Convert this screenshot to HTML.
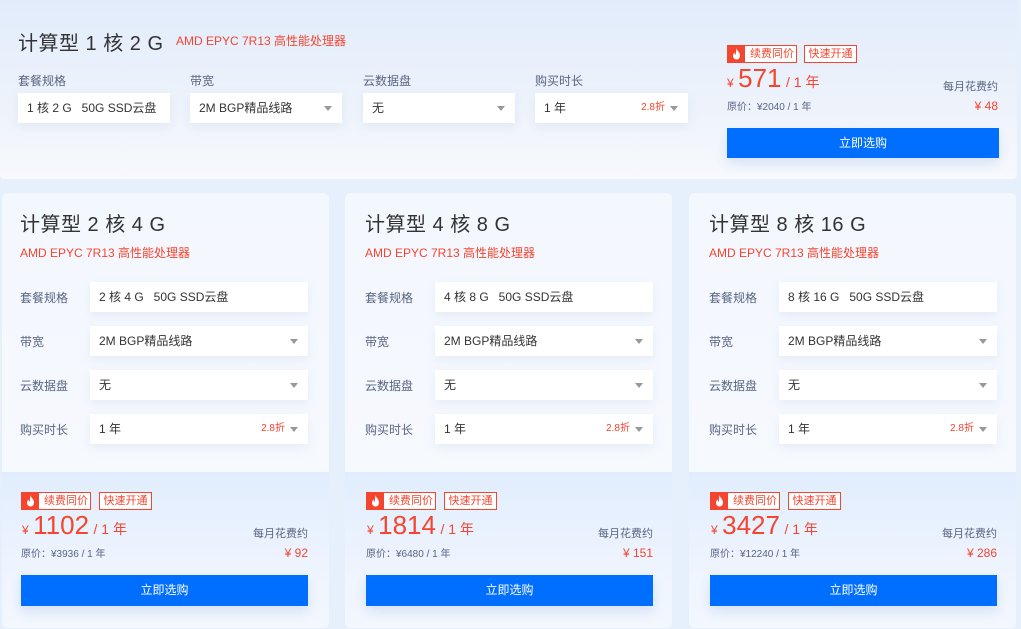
<!DOCTYPE html>
<html><head><meta charset="utf-8"><style>
*{margin:0;padding:0;box-sizing:border-box}
body{width:1021px;height:629px;overflow:hidden;background:#e6f0fd;font-family:"Liberation Sans","Noto Sans CJK SC",sans-serif;position:relative}
.a{position:absolute}
.top{left:0;top:0;width:1017px;height:179px;background:linear-gradient(180deg,#e1ecfb 0%,#eef3fb 60%,#f7f9fd 100%);border-radius:0 0 4px 4px}
.card{top:193px;width:327px;height:435px;border-radius:6px;background:linear-gradient(180deg,#f3f7fe,#f8fafe);overflow:hidden}
.bot{left:0;top:279px;width:100%;height:156px;background:linear-gradient(180deg,#e1edfd,#eef4fe 60%,#f3f7fe)}
.t{font-size:20px;color:#333;white-space:nowrap;letter-spacing:.5px}
.red{color:#f4452f}
.lab{font-size:12px;color:#596482}
.inp{background:#fff;height:30px;font-size:12px;color:#333;line-height:30px;padding-left:9px;box-shadow:0 4px 10px rgba(150,165,200,.15);white-space:nowrap}
.arr{position:absolute;right:10px;top:13px;width:0;height:0;border-left:4px solid transparent;border-right:4px solid transparent;border-top:5px solid #999}
.dz{position:absolute;right:23px;font-size:10px;color:#f4452f}
.tag{height:18px;border:1px solid #f4452f;font-size:11px;color:#f4452f;line-height:16px;white-space:nowrap;background:#fff}
.fire{display:inline-block;width:17px;height:16px;background:#f4452f;vertical-align:top;position:relative}
.btn{background:#006eff;color:#fff;font-size:12px;text-align:center;height:31px;line-height:31px;box-shadow:0 6px 12px rgba(0,80,200,.12)}
</style></head><body>
<div class="a top"></div>
<div class="a t" style="left:18px;top:27px">计算型 1 核 2 G</div>
<div class="a red" style="left:176px;top:32px;font-size:12px">AMD EPYC 7R13 高性能处理器</div>
<div class="a lab" style="left:18px;top:72px">套餐规格</div>
<div class="a lab" style="left:190px;top:72px">带宽</div>
<div class="a lab" style="left:363px;top:72px">云数据盘</div>
<div class="a lab" style="left:535px;top:72px">购买时长</div>
<div class="a inp" style="left:18px;top:93px;width:152px">1 核 2 G &nbsp; 50G SSD云盘</div>
<div class="a inp" style="left:190px;top:93px;width:152px">2M BGP精品线路<span class="arr"></span></div>
<div class="a inp" style="left:363px;top:93px;width:152px">无<span class="arr"></span></div>
<div class="a inp" style="left:535px;top:93px;width:153px">1 年<span class="dz">2.8折</span><span class="arr"></span></div>
<div class="a tag" style="left:727px;top:45px;width:70px"><span class="fire"><svg width="17" height="16" viewBox="0 0 17 16"><path d="M8.5 2C9 5 12 6 12 9.5 12 12 10.5 13.5 8.5 13.5S5 12 5 9.8c0-1.6 1-2.6 1.8-3.3 0 1.4.5 2.2 1.2 2.5C7.5 6.5 8.5 4.5 8.5 2z" fill="#fff"/></svg></span><span style="padding-left:5px">续费同价</span></div>
<div class="a tag" style="left:804px;top:45px;width:53px;text-align:center">快速开通</div>
<div class="a red" style="left:727px;top:63px;white-space:nowrap"><span style="font-size:12px">¥</span> <span style="font-size:26px">571</span> <span style="font-size:14px">/ 1 年</span></div>
<div class="a lab" style="left:727px;top:98px;font-size:10px">原价：¥2040 / 1 年</div>
<div class="a lab" style="right:23px;top:78px;font-size:11px">每月花费约</div>
<div class="a red" style="right:23px;top:99px;font-size:12px">¥ 48</div>
<div class="a btn" style="left:727px;top:128px;width:272px;height:30px;line-height:30px">立即选购</div>

<div class="a card" style="left:2px"><div class="a bot"></div></div>
<div class="a card" style="left:345px"><div class="a bot"></div></div>
<div class="a card" style="left:689px"><div class="a bot"></div></div>

<div id="c"></div>
<script>
var d=[[0,"2 核 4 G","1102","3936","92"],[345,"4 核 8 G","1814","6480","151"],[689,"8 核 16 G","3427","12240","286"]];
var h="";
d.forEach(function(c){var x=c[0];
h+='<div class="a t" style="left:'+(x+20)+'px;top:208px">计算型 '+c[1]+'</div>';
h+='<div class="a red" style="left:'+(x+20)+'px;top:244px;font-size:12px">AMD EPYC 7R13 高性能处理器</div>';
var L=["套餐规格","带宽","云数据盘","购买时长"],V=[c[1]+' &nbsp; 50G SSD云盘','2M BGP精品线路<span class="arr"></span>','无<span class="arr"></span>','1 年<span class="dz">2.8折</span><span class="arr"></span>'];
for(var i=0;i<4;i++){var y=282+i*44;
h+='<div class="a lab" style="left:'+(x+20)+'px;top:'+(y+7)+'px">'+L[i]+'</div>';
h+='<div class="a inp" style="left:'+(x+90)+'px;top:'+y+'px;width:218px">'+V[i]+'</div>';}
h+='<div class="a tag" style="left:'+(x+21)+'px;top:492px;width:70px"><span class="fire"><svg width="17" height="16" viewBox="0 0 17 16"><path d="M8.5 2C9 5 12 6 12 9.5 12 12 10.5 13.5 8.5 13.5S5 12 5 9.8c0-1.6 1-2.6 1.8-3.3 0 1.4.5 2.2 1.2 2.5C7.5 6.5 8.5 4.5 8.5 2z" fill="#fff"/></svg></span><span style="padding-left:5px">续费同价</span></div>';
h+='<div class="a tag" style="left:'+(x+99)+'px;top:492px;width:53px;text-align:center">快速开通</div>';
h+='<div class="a red" style="left:'+(x+22)+'px;top:510px;white-space:nowrap"><span style="font-size:12px">¥</span> <span style="font-size:26px">'+c[2]+'</span> <span style="font-size:14px">/ 1 年</span></div>';
h+='<div class="a lab" style="left:'+(x+21)+'px;top:545px;font-size:10px">原价：¥'+c[3]+' / 1 年</div>';
h+='<div class="a lab" style="left:'+(x+228)+'px;top:525px;font-size:11px;width:80px;text-align:right">每月花费约</div>';
h+='<div class="a red" style="left:'+(x+228)+'px;top:546px;font-size:12px;width:80px;text-align:right">¥ '+c[4]+'</div>';
h+='<div class="a btn" style="left:'+(x+21)+'px;top:575px;width:287px">立即选购</div>';
});
document.getElementById("c").innerHTML=h;
</script>
</body></html>
